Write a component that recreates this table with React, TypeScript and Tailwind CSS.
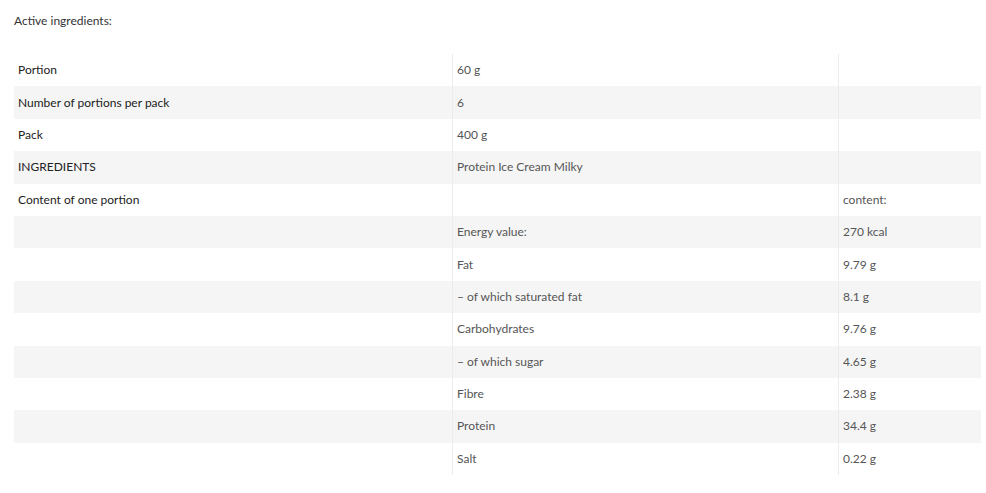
import React from 'react';

type Row = { label: string; value: string; extra: string };

const rows: Row[] = [
  { label: 'Portion', value: '60 g', extra: '' },
  { label: 'Number of portions per pack', value: '6', extra: '' },
  { label: 'Pack', value: '400 g', extra: '' },
  { label: 'INGREDIENTS', value: 'Protein Ice Cream Milky', extra: '' },
  { label: 'Content of one portion', value: '', extra: 'content:' },
  { label: '', value: 'Energy value:', extra: '270 kcal' },
  { label: '', value: 'Fat', extra: '9.79 g' },
  { label: '', value: '– of which saturated fat', extra: '8.1 g' },
  { label: '', value: 'Carbohydrates', extra: '9.76 g' },
  { label: '', value: '– of which sugar', extra: '4.65 g' },
  { label: '', value: 'Fibre', extra: '2.38 g' },
  { label: '', value: 'Protein', extra: '34.4 g' },
  { label: '', value: 'Salt', extra: '0.22 g' },
];

export default function App() {
  return (
    <div
      className="w-[986px] h-[493px] bg-white text-[12px] text-[#555]"
      style={{ fontFamily: '"Lato", "Open Sans", sans-serif' }}
    >
      <div className="pl-[14px] pt-[12px] h-[54px] text-[#333]">Active ingredients:</div>

      {/* Table */}
      <div className="ml-[14px] w-[967px] flex flex-col">
        {rows.map((row, i) => (
          <div
            key={i}
            className={`flex h-[32.4px] items-center ${i % 2 === 1 ? 'bg-[#f5f5f5]' : 'bg-white'}`}
          >
            <div className="w-[438px] h-full flex items-center pl-[4px] text-[#222]">
              {row.label}
            </div>
            <div className="w-[386px] h-full flex items-center pl-[4px] border-l border-[#ececec]">
              {row.value}
            </div>
            <div className="flex-1 h-full flex items-center pl-[4px] border-l border-[#ececec]">
              {row.extra}
            </div>
          </div>
        ))}
      </div>
    </div>
  );
}
